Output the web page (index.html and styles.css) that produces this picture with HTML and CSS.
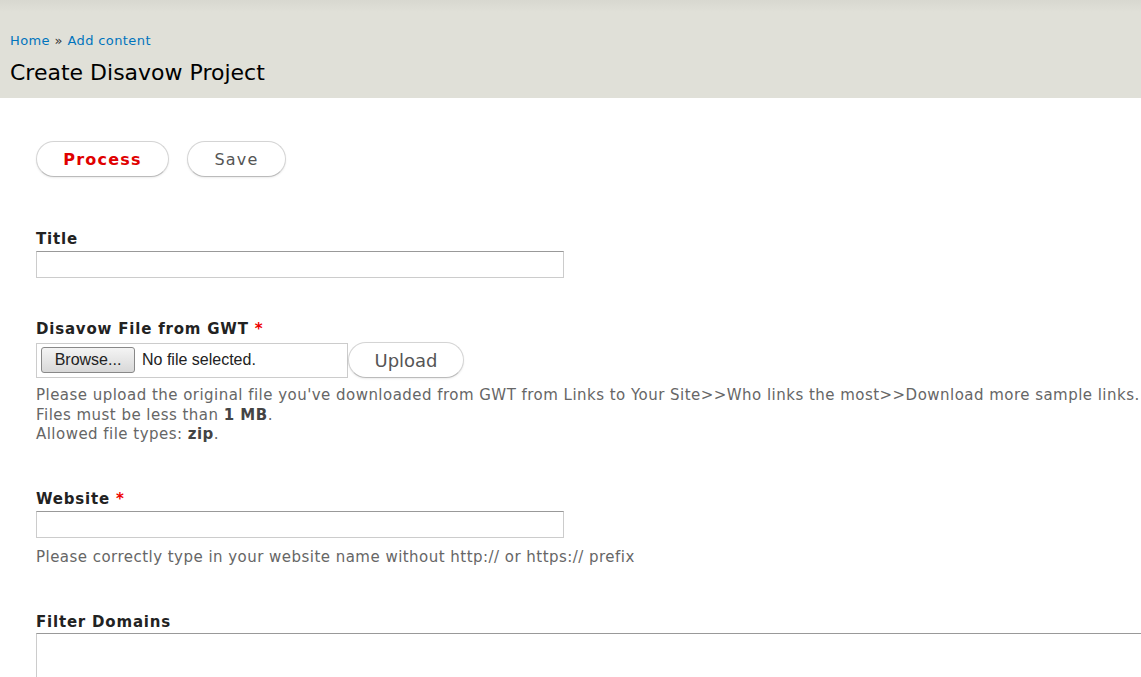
FILE: index.html
```html
<!DOCTYPE html>
<html>
<head>
<meta charset="utf-8">
<link rel="stylesheet" href="styles.css">
</head>
<body>
<div class="header">
  <div class="breadcrumb"><a href="#">Home</a> » <a href="#">Add content</a></div>
  <h1 class="page-title">Create Disavow Project</h1>
</div>
<div class="content">
  <div class="actions">
    <button class="btn btn-process">Process</button>
    <button class="btn btn-save">Save</button>
  </div>

  <div class="field field-title">
    <label class="label">Title</label>
    <input class="text" type="text">
  </div>

  <div class="field field-file">
    <label class="label">Disavow File from GWT <span class="req">*</span></label>
    <div class="file-row">
      <div class="file-input"><span class="browse">Browse...</span><span class="nofile">No file selected.</span></div>
      <button class="btn btn-upload">Upload</button>
    </div>
    <div class="description">
      Please upload the original file you've downloaded from GWT from Links to Your Site&gt;&gt;Who links the most&gt;&gt;Download more sample links.<br>
      Files must be less than <strong>1 MB</strong>.<br>
      Allowed file types: <strong>zip</strong>.
    </div>
  </div>

  <div class="field field-website">
    <label class="label">Website <span class="req">*</span></label>
    <input class="text" type="text">
    <div class="description">Please correctly type in your website name without http:// or https:// prefix</div>
  </div>

  <div class="field field-filter">
    <label class="label">Filter Domains</label>
    <textarea class="textarea"></textarea>
  </div>
</div>
</body>
</html>
```

FILE: styles.css
```css
html, body {
  margin: 0;
  padding: 0;
  background: #fff;
  overflow: hidden;
  font-family: "DejaVu Sans", Verdana, sans-serif;
}
.header {
  background: linear-gradient(to bottom, #d8d8d0 0px, #e0e0d8 12px, #e0e0d8 100%);
  height: 98px;
  padding: 0 10px;
  box-sizing: border-box;
  padding-top: 32px;
}
.breadcrumb {
  font-size: 13px;
  line-height: 18px;
  letter-spacing: 0.4px;
  color: #333;
}
.breadcrumb a {
  color: #0074bd;
  text-decoration: none;
}
.page-title {
  margin: 8px 0 0;
  font-weight: normal;
  font-size: 22px;
  line-height: 30px;
  color: #000;
}
.content {
  padding: 43px 36px 0;
}
.actions {
  display: flex;
  gap: 18px;
  height: 36px;
}
.btn {
  font-family: "DejaVu Sans", Verdana, sans-serif;
  background: #fff;
  border: 1px solid #d4d4d4;
  border-bottom-color: #bbb;
  border-radius: 18px;
  box-shadow: 0 1px 2px rgba(0,0,0,0.08);
  font-size: 16px;
  letter-spacing: 1.2px;
  padding: 0;
  color: #555;
}
.btn-process {
  width: 133px;
  height: 36px;
  color: #e00000;
  font-weight: bold;
}
.btn-save {
  width: 99px;
  height: 36px;
}
.label {
  display: block;
  font-weight: bold;
  font-size: 15px;
  line-height: 18px;
  letter-spacing: 0.8px;
  color: #222;
}
.req { color: #e00; }
.field-title { margin-top: 53px; }
.field-file { margin-top: 42px; }
.field-website { margin-top: 45px; }
.field-filter { margin-top: 46px; }
.text {
  display: block;
  box-sizing: border-box;
  width: 528px;
  height: 27px;
  margin-top: 3px;
  border: 1px solid #ccc;
  border-top-color: #999;
  padding: 0;
}
.file-row {
  display: flex;
  align-items: center;
  margin-top: 4px;
}
.file-input {
  box-sizing: border-box;
  width: 312px;
  height: 35px;
  border: 1px solid #ccc;
  display: flex;
  align-items: center;
  padding-left: 4px;
  font-family: "Liberation Sans", Arial, sans-serif;
  font-size: 16px;
  color: #222;
}
.browse {
  box-sizing: border-box;
  width: 94px;
  height: 26px;
  border: 1px solid #888;
  border-radius: 3px;
  background: linear-gradient(#f4f4f4, #d8d8d8);
  display: flex;
  align-items: center;
  justify-content: center;
  margin-right: 7px;
}
.btn-upload {
  width: 116px;
  height: 36px;
  font-size: 18px;
  letter-spacing: 0;
  margin-left: 0;
}
.description {
  margin-top: 8px;
  font-size: 15px;
  line-height: 19.5px;
  letter-spacing: 0.47px;
  color: #666;
  white-space: nowrap;
}
.description strong { color: #444; }
.field-website .description { margin-top: 10px; }
.textarea {
  display: block;
  box-sizing: border-box;
  width: 1200px;
  height: 100px;
  margin-top: 2px;
  border: 1px solid #ccc;
  border-top-color: #999;
  resize: none;
}
```
